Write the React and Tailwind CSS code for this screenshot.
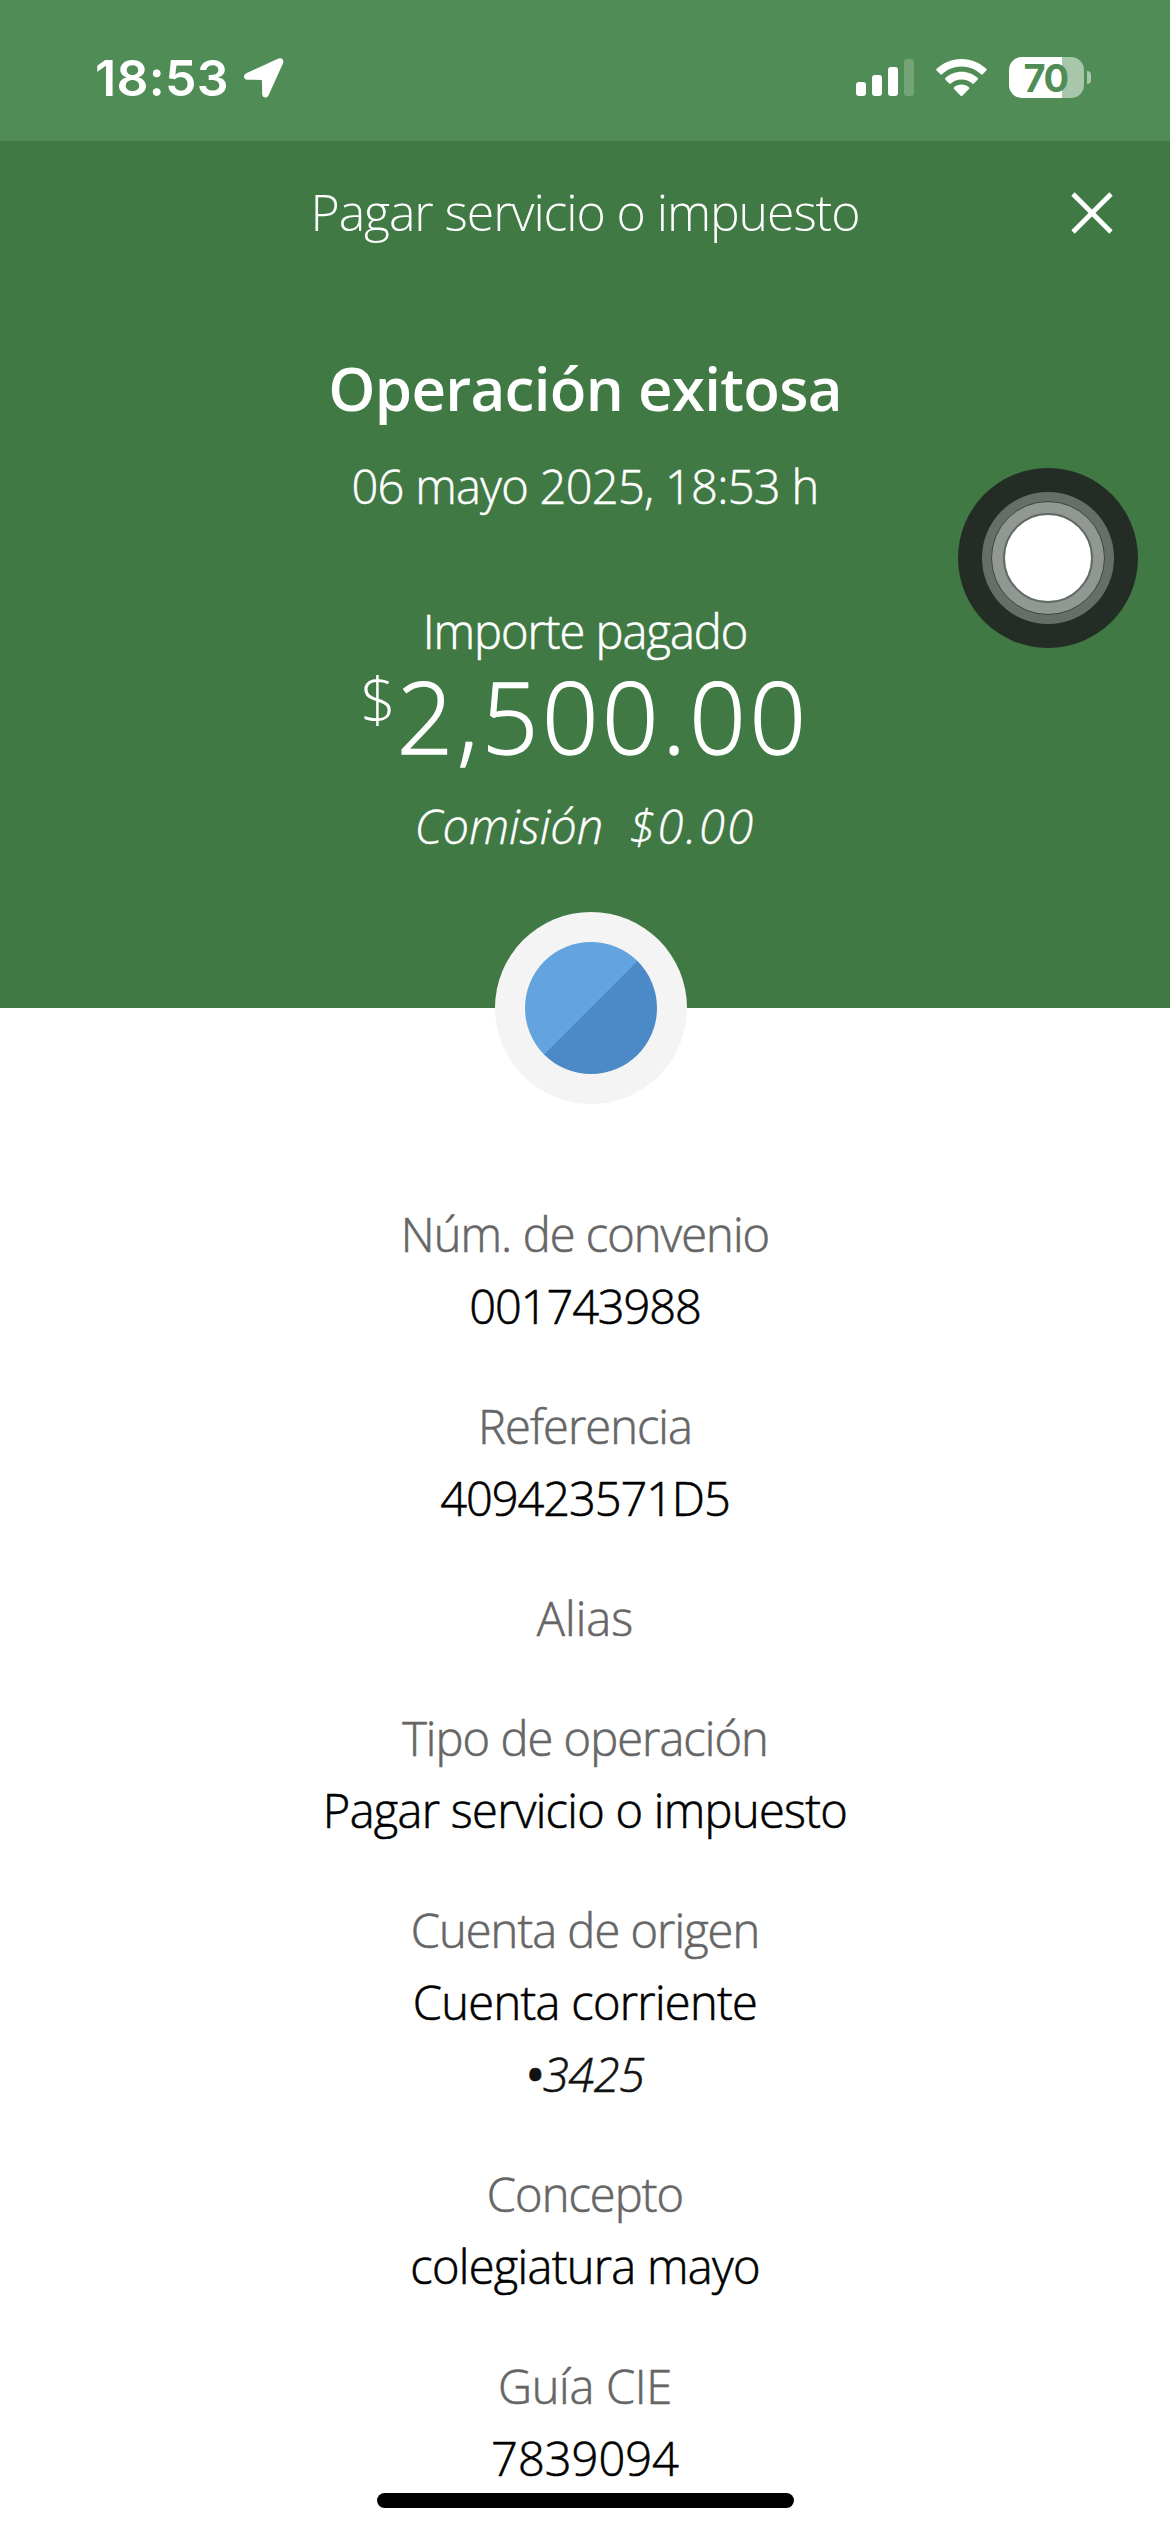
import { X } from "lucide-react";

const details = [
  { label: "Núm. de convenio", value: "001743988", valueClass: "tracking-[-1.1px]" },
  { label: "Referencia", value: "409423571D5", valueClass: "tracking-[-1.1px]" },
  { label: "Alias", labelClass: "tracking-normal" },
  { label: "Tipo de operación", value: "Pagar servicio o impuesto" },
  { label: "Cuenta de origen", value: "Cuenta corriente", extra: "3425" },
  { label: "Concepto", value: "colegiatura mayo" },
  {
    label: "Guía CIE",
    labelClass: "tracking-[-0.3px]",
    value: "7839094",
    valueClass: "tracking-normal",
  },
];

function LocationArrow() {
  return (
    <svg className="ml-[15px] h-[40px] w-[40px]" viewBox="0 0 40 40" fill="white">
      <path d="M34.5.6 2.4 15.2C-1.2 16.9-.6 21.6 3.2 21.7L16.8 21.9C17.6 21.9 18 22.3 18 23.1L18.2 36C18.3 40.2 23 40.7 24.6 37.2L38.9 5.4C40.5 2 37.9-.9 34.5.6Z" />
    </svg>
  );
}

function Signal() {
  return (
    <svg className="h-[37px] w-[58px]" viewBox="0 0 58 37" fill="white">
      <rect x="0" y="23" width="10" height="14" rx="3" />
      <rect x="16" y="16" width="10" height="21" rx="3" />
      <rect x="32" y="8" width="10" height="29" rx="3" />
      <rect x="48" y="0" width="10" height="37" rx="3" opacity="0.2" />
    </svg>
  );
}

function Wifi() {
  return (
    <svg className="ml-[22px] h-[38px] w-[51px]" viewBox="0 0 51 38" fill="white">
      <path d="M25.5 0C15.8 0 7.2 3.8.7 9.8A1.2 1.2 0 0 0 .7 11.5L4.3 15.2A1.2 1.2 0 0 0 6 15.2C11.2 10.4 18 7.6 25.5 7.6S39.8 10.4 45 15.2A1.2 1.2 0 0 0 46.7 15.2L50.3 11.5A1.2 1.2 0 0 0 50.3 9.8C43.8 3.8 35.2 0 25.5 0Z" />
      <path d="M25.5 12.8C19.2 12.8 13.6 15.2 9.4 19A1.2 1.2 0 0 0 9.4 20.7L13.2 24.5A1.2 1.2 0 0 0 14.8 24.5C17.7 21.9 21.4 20.4 25.5 20.4S33.3 21.9 36.2 24.5A1.2 1.2 0 0 0 37.8 24.5L41.6 20.7A1.2 1.2 0 0 0 41.6 19C37.4 15.2 31.8 12.8 25.5 12.8Z" />
      <path d="M25.5 25.6C22.6 25.6 20.1 26.6 18.1 28.2A1.2 1.2 0 0 0 18.1 30L24.6 36.7A1.3 1.3 0 0 0 26.4 36.7L32.9 30A1.2 1.2 0 0 0 32.9 28.2C30.9 26.6 28.4 25.6 25.5 25.6Z" />
    </svg>
  );
}

function Battery() {
  return (
    <div className="ml-[22px] flex items-center gap-[3px]">
      <div className="flex h-[41px] w-[75px] items-center justify-center rounded-[13px] bg-linear-to-r from-white from-[70.6%] to-[#a7c6aa] to-[70.6%] pr-[2px] font-[Inter] text-[38px] leading-none font-bold tracking-[-1.5px] text-[#508d56]">
        70
      </div>
      <div className="h-[13px] w-[4px] rounded-r-full bg-[#a7c6aa]" />
    </div>
  );
}

function StatusBar() {
  return (
    <div className="flex h-[141px] items-start justify-between bg-[#508d56] pr-[79px] pl-[95px]">
      <div className="mt-[48px] flex h-[60px] items-center">
        <span className="font-[Inter] text-[50px] leading-none font-semibold tracking-[0.3px] text-white">
          18:53
        </span>
        <LocationArrow />
      </div>
      <div className="mt-[57px] flex h-[41px] items-center">
        <Signal />
        <Wifi />
        <Battery />
      </div>
    </div>
  );
}

function AssistiveTouch() {
  return (
    <div className="absolute top-[468px] left-[958px] flex h-[180px] w-[180px] items-center justify-center rounded-full bg-[#232d25]">
      <div className="flex h-[132px] w-[132px] items-center justify-center rounded-full bg-[#666f67]">
        <div className="flex h-[114px] w-[114px] items-center justify-center rounded-full border border-[#3b453d] bg-[#919893]">
          <div className="h-[90px] w-[90px] rounded-full border-2 border-[#616a63] bg-white" />
        </div>
      </div>
    </div>
  );
}

function ServiceBadge() {
  return (
    <div className="absolute bottom-[-96px] left-[495px] flex h-[192px] w-[192px] items-center justify-center rounded-full bg-[#f4f4f4]">
      <div className="h-[132px] w-[132px] rounded-full bg-linear-to-br from-[#63a3e0] from-50% to-[#4c89c7] to-50%" />
    </div>
  );
}

function Detail({
  label,
  value,
  extra,
  labelClass = "tracking-[-0.95px]",
  valueClass = "tracking-[-0.7px]",
}) {
  return (
    <div className="text-[47px] leading-[72px] [-webkit-text-stroke-width:0.6px]">
      <dt className={`text-[#666666] ${labelClass}`}>{label}</dt>
      {value ? <dd className={`text-black ${valueClass}`}>{value}</dd> : null}
      {extra ? (
        <dd className="tracking-[-0.4px] text-[#121212] italic">
          <span className="font-semibold">•</span>
          {extra}
        </dd>
      ) : null}
    </div>
  );
}

export default function App() {
  return (
    <div className="relative h-[2532px] w-[1170px] overflow-hidden bg-white font-['Open_Sans',sans-serif] font-light">
      <StatusBar />

      <header className="relative h-[867px] bg-[#407944] text-center text-white">
        <div className="grid h-[142px] grid-cols-[170px_1fr_170px] items-center">
          <span />
          <h1 className="text-[50px] leading-[72px] tracking-[-1.1px] whitespace-nowrap">
            Pagar servicio o impuesto
          </h1>
          <button className="flex justify-center pt-[2px] pl-[14px]">
            <X className="h-[76px] w-[76px]" strokeWidth={1.5} strokeLinecap="butt" />
          </button>
        </div>

        <h2 className="mt-[65px] text-[60px] leading-[80px] font-semibold tracking-[-0.7px]">
          Operación exitosa
        </h2>
        <p className="mt-[22px] text-[47px] leading-[72px] tracking-[-0.7px] [-webkit-text-stroke-width:0.5px]">
          06 mayo 2025, 18:53 h
        </p>

        <p className="mt-[73px] text-[47px] leading-[72px] tracking-[-1px] [-webkit-text-stroke-width:0.6px]">
          Importe pagado
        </p>
        <div className="flex h-[98px] justify-center">
          <span className="mr-[1px] text-[62px] leading-[64px]">$</span>
          <span className="text-[99px] leading-[97px] tracking-[3.6px] [-webkit-text-stroke-width:1.4px]">
            2,500.00
          </span>
        </div>
        <p className="mt-[25px] flex justify-center gap-[26px] text-[47px] leading-[72px] italic [-webkit-text-stroke-width:0.4px]">
          <span>Comisión</span>
          <span className="tracking-[2.4px]">$0.00</span>
        </p>

        <ServiceBadge />
      </header>

      <dl className="flex flex-col gap-[48px] pt-[190px] text-center">
        {details.map((item) => (
          <Detail key={item.label} {...item} />
        ))}
      </dl>

      <AssistiveTouch />
      <div className="absolute bottom-[24px] left-[377px] h-[15px] w-[417px] rounded-full bg-black" />
    </div>
  );
}
